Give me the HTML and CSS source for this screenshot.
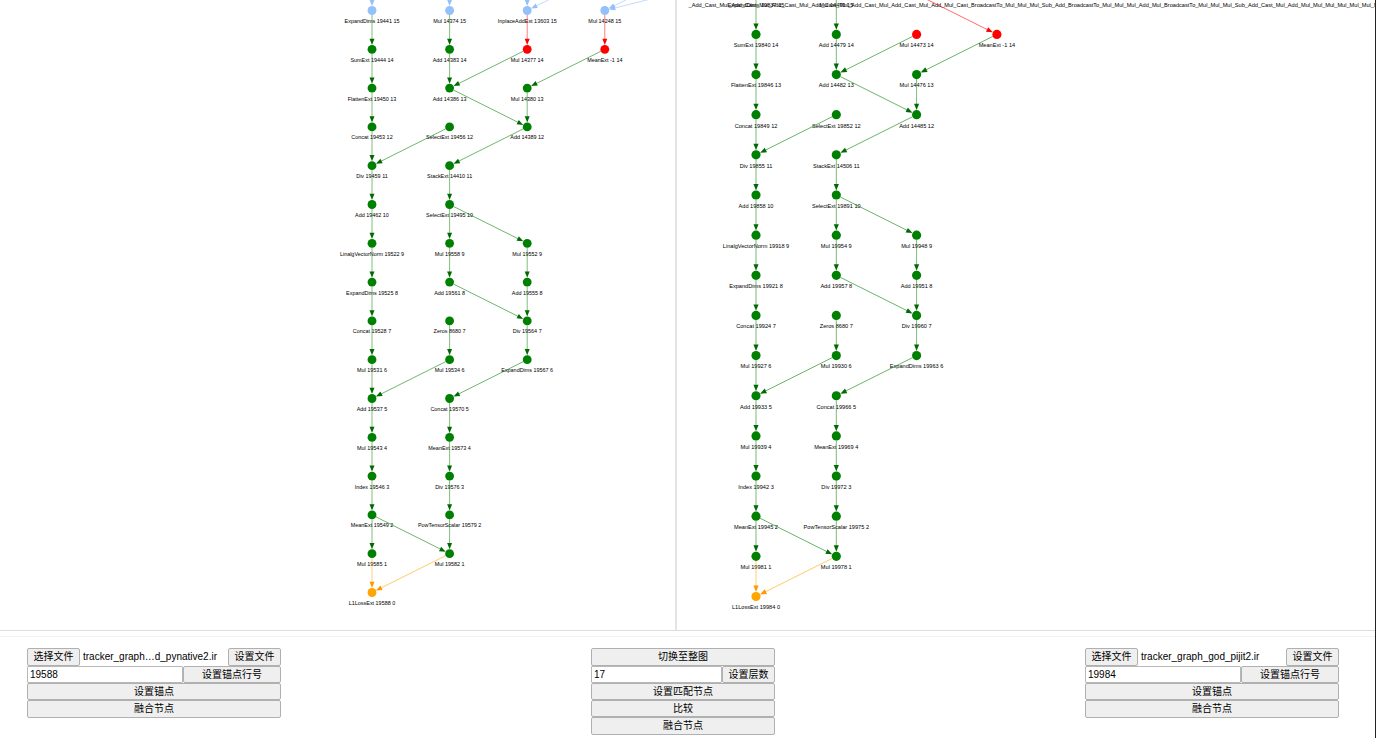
FILE: index.html
```html
<!DOCTYPE html>
<html lang="zh-CN">
<head>
<meta charset="utf-8">
<title>Tracker graph</title>
<link rel="stylesheet" href="styles.css">
</head>
<body>
<main class="graphs">
  <section class="graph-pane graph-pane-left"><svg class="graph" id="graph-left" role="img" aria-label="pynative2"></svg></section>
  <section class="graph-pane graph-pane-right"><svg class="graph" id="graph-right" role="img" aria-label="pijit2"></svg></section>
</main>
<footer class="controls">
  <form class="panel panel-side">
    <div class="row file-row">
      <button type="button" class="btn">选择文件</button>
      <output class="file-name">tracker_graph…d_pynative2.ir</output>
      <button type="button" class="btn">设置文件</button>
    </div>
    <div class="row anchor-row">
      <input class="field" type="text" value="19588" aria-label="锚点行号">
      <button type="button" class="btn">设置锚点行号</button>
    </div>
    <button type="button" class="btn">设置锚点</button>
    <button type="button" class="btn">融合节点</button>
  </form>
  <form class="panel panel-center">
    <button type="button" class="btn">切换至整图</button>
    <div class="row level-row">
      <input class="field" type="text" value="17" aria-label="层数">
      <button type="button" class="btn">设置层数</button>
    </div>
    <button type="button" class="btn">设置匹配节点</button>
    <button type="button" class="btn">比较</button>
    <button type="button" class="btn">融合节点</button>
  </form>
  <form class="panel panel-side">
    <div class="row file-row">
      <button type="button" class="btn">选择文件</button>
      <output class="file-name">tracker_graph_god_pijit2.ir</output>
      <button type="button" class="btn">设置文件</button>
    </div>
    <div class="row anchor-row">
      <input class="field" type="text" value="19984" aria-label="锚点行号">
      <button type="button" class="btn">设置锚点行号</button>
    </div>
    <button type="button" class="btn">设置锚点</button>
    <button type="button" class="btn">融合节点</button>
  </form>
</footer>
<script src="graph.js"></script>
</body>
</html>
```
FILE: styles.css
```css
* { box-sizing: border-box; }

body {
  margin: 0;
  height: 100vh;
  display: flex;
  flex-direction: column;
  overflow: hidden;
  background: #fff;
  border-right: 1px solid #222;
  color: #000;
  font: 10px "Liberation Sans", "Noto Sans CJK SC", sans-serif;
}

.graphs {
  flex: 1;
  min-height: 0;
  display: flex;
  border-bottom: 1px solid #ddd;
}

.graph-pane { min-width: 0; overflow: hidden; }
.graph-pane-left { flex: 676; border-right: 2px solid #e4e4e4; }
.graph-pane-right { flex: 699; }
.graph { display: block; width: 100%; height: 100%; }

.label { font-size: 7px; fill: #000; text-anchor: middle; }
.label-long { text-anchor: start; }
.line { stroke-width: 1; opacity: 0.65; }

.green { fill: #008000; stroke: #008000; }
.blue { fill: #94c0fb; stroke: #94c0fb; }
.red { fill: #ff0000; stroke: #ff0000; }
.orange { fill: #ffa500; stroke: #ffa500; }
.head.green { fill: #006a00; }
.head.orange { fill: #ff9800; }
.node, .head { stroke: none; }

.controls {
  display: flex;
  justify-content: space-between;
  align-items: flex-start;
  margin-top: 5px;
  padding: 11px 36px 3px 27px;
  border-top: 1px solid #f3f3f3;
}

.panel {
  display: flex;
  flex-direction: column;
  margin: 0;
}
.panel-side { width: 254px; }
.panel-center { width: 184px; }

.row { display: flex; }
.file-name { flex: 1; padding-left: 3px; line-height: 18px; white-space: nowrap; }
.file-row .btn { width: 53px; }
.anchor-row .btn { width: 98px; }
.level-row .btn { width: 53px; }

.btn {
  height: 17px;
  margin: 0;
  padding: 0;
  border: 1px solid #b0b0b0;
  border-radius: 2px;
  background: #efefef;
  color: #000;
  font: inherit;
  line-height: 15px;
}
.file-row .btn,
.panel > .btn:first-child,
.panel > .btn:last-child { height: 18px; line-height: 16px; }

.field {
  flex: 1;
  min-width: 0;
  height: 17px;
  margin: 0;
  padding: 0 2px;
  border: 1px solid #b8b8b8;
  border-radius: 1px;
  background: #fff;
  color: #000;
  font: inherit;
}
```
FILE: graph.js
```js
const SVG_NS = "http://www.w3.org/2000/svg";
const STEP = 100;
const RADIUS = 5.7;

// Each node: [id, column, level, label, colour]. Levels count up from the loss node.
function tail(n) {
  return [
    ["sum", 0, 14, "SumExt " + n[0], "green"],
    ["addA", 1, 14, "Add " + n[1], "green"],
    ["mulA", 2, 14, "Mul " + n[2], "red"],
    ["meanA", 3, 14, "MeanExt -1", "red"],
    ["flat", 0, 13, "FlattenExt " + n[3], "green"],
    ["addB", 1, 13, "Add " + n[4], "green"],
    ["mulB", 2, 13, "Mul " + n[5], "green"],
    ["cat", 0, 12, "Concat " + n[6], "green"],
    ["selA", 1, 12, "SelectExt " + n[7], "green"],
    ["addC", 2, 12, "Add " + n[8], "green"],
    ["divA", 0, 11, "Div " + n[9], "green"],
    ["stack", 1, 11, "StackExt " + n[10], "green"],
    ["addD", 0, 10, "Add " + n[11], "green"],
    ["selB", 1, 10, "SelectExt " + n[12], "green"],
    ["norm", 0, 9, "LinalgVectorNorm " + n[13], "green"],
    ["mulC", 1, 9, "Mul " + n[14], "green"],
    ["mulD", 2, 9, "Mul " + n[15], "green"],
    ["expA", 0, 8, "ExpandDims " + n[16], "green"],
    ["addE", 1, 8, "Add " + n[17], "green"],
    ["addF", 2, 8, "Add " + n[18], "green"],
    ["catB", 0, 7, "Concat " + n[19], "green"],
    ["zeros", 1, 7, "Zeros 8680", "green"],
    ["divB", 2, 7, "Div " + n[20], "green"],
    ["mulE", 0, 6, "Mul " + n[21], "green"],
    ["mulF", 1, 6, "Mul " + n[22], "green"],
    ["expB", 2, 6, "ExpandDims " + n[23], "green"],
    ["addG", 0, 5, "Add " + n[24], "green"],
    ["catC", 1, 5, "Concat " + n[25], "green"],
    ["mulG", 0, 4, "Mul " + n[26], "green"],
    ["meanB", 1, 4, "MeanExt " + n[27], "green"],
    ["index", 0, 3, "Index " + n[28], "green"],
    ["divC", 1, 3, "Div " + n[29], "green"],
    ["meanC", 0, 2, "MeanExt " + n[30], "green"],
    ["pow", 1, 2, "PowTensorScalar " + n[31], "green"],
    ["mulH", 0, 1, "Mul " + n[32], "green"],
    ["mulI", 1, 1, "Mul " + n[33], "green"],
    ["loss", 0, 0, "L1LossExt " + n[34], "orange"]
  ];
}

const tailEdges = `sum flat,flat cat,cat divA,selA divA,divA addD,addD norm,norm expA,
expA catB,catB mulE,mulE addG,mulF addG,zeros mulF,addG mulG,mulG index,index meanC,
meanC mulH,meanC mulI,addA addB,mulA addB,meanA mulB,mulB addC,addB addC,addC stack,
stack selB,selB mulC,selB mulD,mulC addE,mulD addF,addE divB,addF divB,divB expB,
expB catC,catC meanB,meanB divC,divC pow,pow mulI`
  .split(",").map(pair => [...pair.trim().split(" "), "green"])
  .concat([["mulH", "loss", "orange"], ["mulI", "loss", "orange"]]);

const fused = "_Add_Cast_Mul".repeat(6) +
  "_Add_Mul_Cast_BroadcastTo_Mul_Mul_Mul_Sub_Add_BroadcastTo_Mul_Mul_Mul_Add_Mul" +
  "_BroadcastTo_Mul_Mul_Mul_Sub_Add_Cast_Mul_Add_Mul_Mul_Mul_Mul_Mul_Mul_Mul_Mul";

const leftGraph = {
  pan: [372, 592.5], zoom: 0.776,
  nodes: [
    ["t0", 0, 15, "ExpandDims 19441", "blue"],
    ["t1", 1, 15, "Mul 14374", "blue"],
    ["t2", 2, 15, "InplaceAddExt 13603", "blue"],
    ["t3", 3, 15, "Mul 14248", "blue"],
    ["u0", 0, 16, "", "blue"], ["u1", 1, 16, "", "blue"], ["u2", 2, 16, "", "blue"],
    ["u3", 3, 16, "", "blue"], ["u4", 4, 16, "", "blue"], ["u5", 5, 16, "", "blue"],
    ...tail([19444, 14383, 14377, 19450, 14386, 14380, 19453, 19456, 14389, 19459,
      14410, 19462, 19495, 19522, 19558, 19552, 19525, 19561, 19555, 19528, 19564,
      19531, 19534, 19567, 19537, 19570, 19543, 19573, 19546, 19576, 19549, 19579,
      19585, 19582, 19588])
  ],
  edges: [
    ["u0", "t0", "blue"], ["u1", "t1", "blue"], ["u2", "t2", "blue"],
    ["u3", "t2", "blue"], ["u4", "t3", "blue"], ["u5", "t3", "blue"],
    ["t0", "sum", "green"], ["t1", "addA", "green"],
    ["t2", "mulA", "red"], ["t3", "meanA", "red"], ...tailEdges
  ]
};

const rightGraph = {
  pan: [79, 596.5], zoom: 0.803,
  nodes: [
    ["t0", 0, 15, "ExpandDims 19837", "green"],
    ["t1", 1, 15, "Mul 14470", "green"],
    ["t2", 2, 15, "", "blue"],
    ...tail([19840, 14479, 14473, 19846, 14482, 14476, 19849, 19852, 14485, 19855,
      14506, 19858, 19891, 19918, 19954, 19948, 19921, 19957, 19951, 19924, 19960,
      19927, 19930, 19963, 19933, 19966, 19939, 19969, 19942, 19972, 19945, 19975,
      19981, 19978, 19984])
  ],
  edges: [
    ["t0", "sum", "green"], ["t1", "addA", "green"], ["t2", "meanA", "red"],
    ...tailEdges
  ],
  longLabel: { x: -84, level: 15, text: fused }
};

function add(parent, tag, attrs, text) {
  const el = document.createElementNS(SVG_NS, tag);
  for (const key in attrs) el.setAttribute(key, attrs[key]);
  if (text) el.textContent = text;
  parent.appendChild(el);
  return el;
}

function draw(svg, graph) {
  const root = add(svg, "g", {
    transform: `translate(${graph.pan}) scale(${graph.zoom})`
  });
  const at = {};
  for (const [id, col, level, label] of graph.nodes) {
    at[id] = [col * STEP, -level * STEP / 2];
    if (label) {
      add(root, "text", { class: "label", x: at[id][0], y: at[id][1] + 16 }, `${label} ${level}`);
    }
  }
  if (graph.longLabel) {
    const { x, level, text } = graph.longLabel;
    add(root, "text", { class: "label label-long", x, y: -level * STEP / 2 + 16 }, text);
  }
  for (const [from, to, colour] of graph.edges) {
    const [x1, y1] = at[from];
    const [x2, y2] = at[to];
    const length = Math.hypot(x2 - x1, y2 - y1);
    const angle = Math.atan2(y2 - y1, x2 - x1) * 180 / Math.PI;
    const tip = length - RADIUS;
    const edge = add(root, "g", { transform: `translate(${x1} ${y1}) rotate(${angle})` });
    add(edge, "line", { class: `line ${colour}`, x1: RADIUS, y1: 0, x2: tip - 7, y2: 0 });
    add(edge, "polygon", {
      class: `head ${colour}`,
      points: `${tip},0 ${tip - 8},-3.2 ${tip - 8},3.2`
    });
  }
  for (const [id, , , , colour] of graph.nodes) {
    add(root, "circle", { class: `node ${colour}`, cx: at[id][0], cy: at[id][1], r: RADIUS });
  }
}

draw(document.getElementById("graph-left"), leftGraph);
draw(document.getElementById("graph-right"), rightGraph);
```
